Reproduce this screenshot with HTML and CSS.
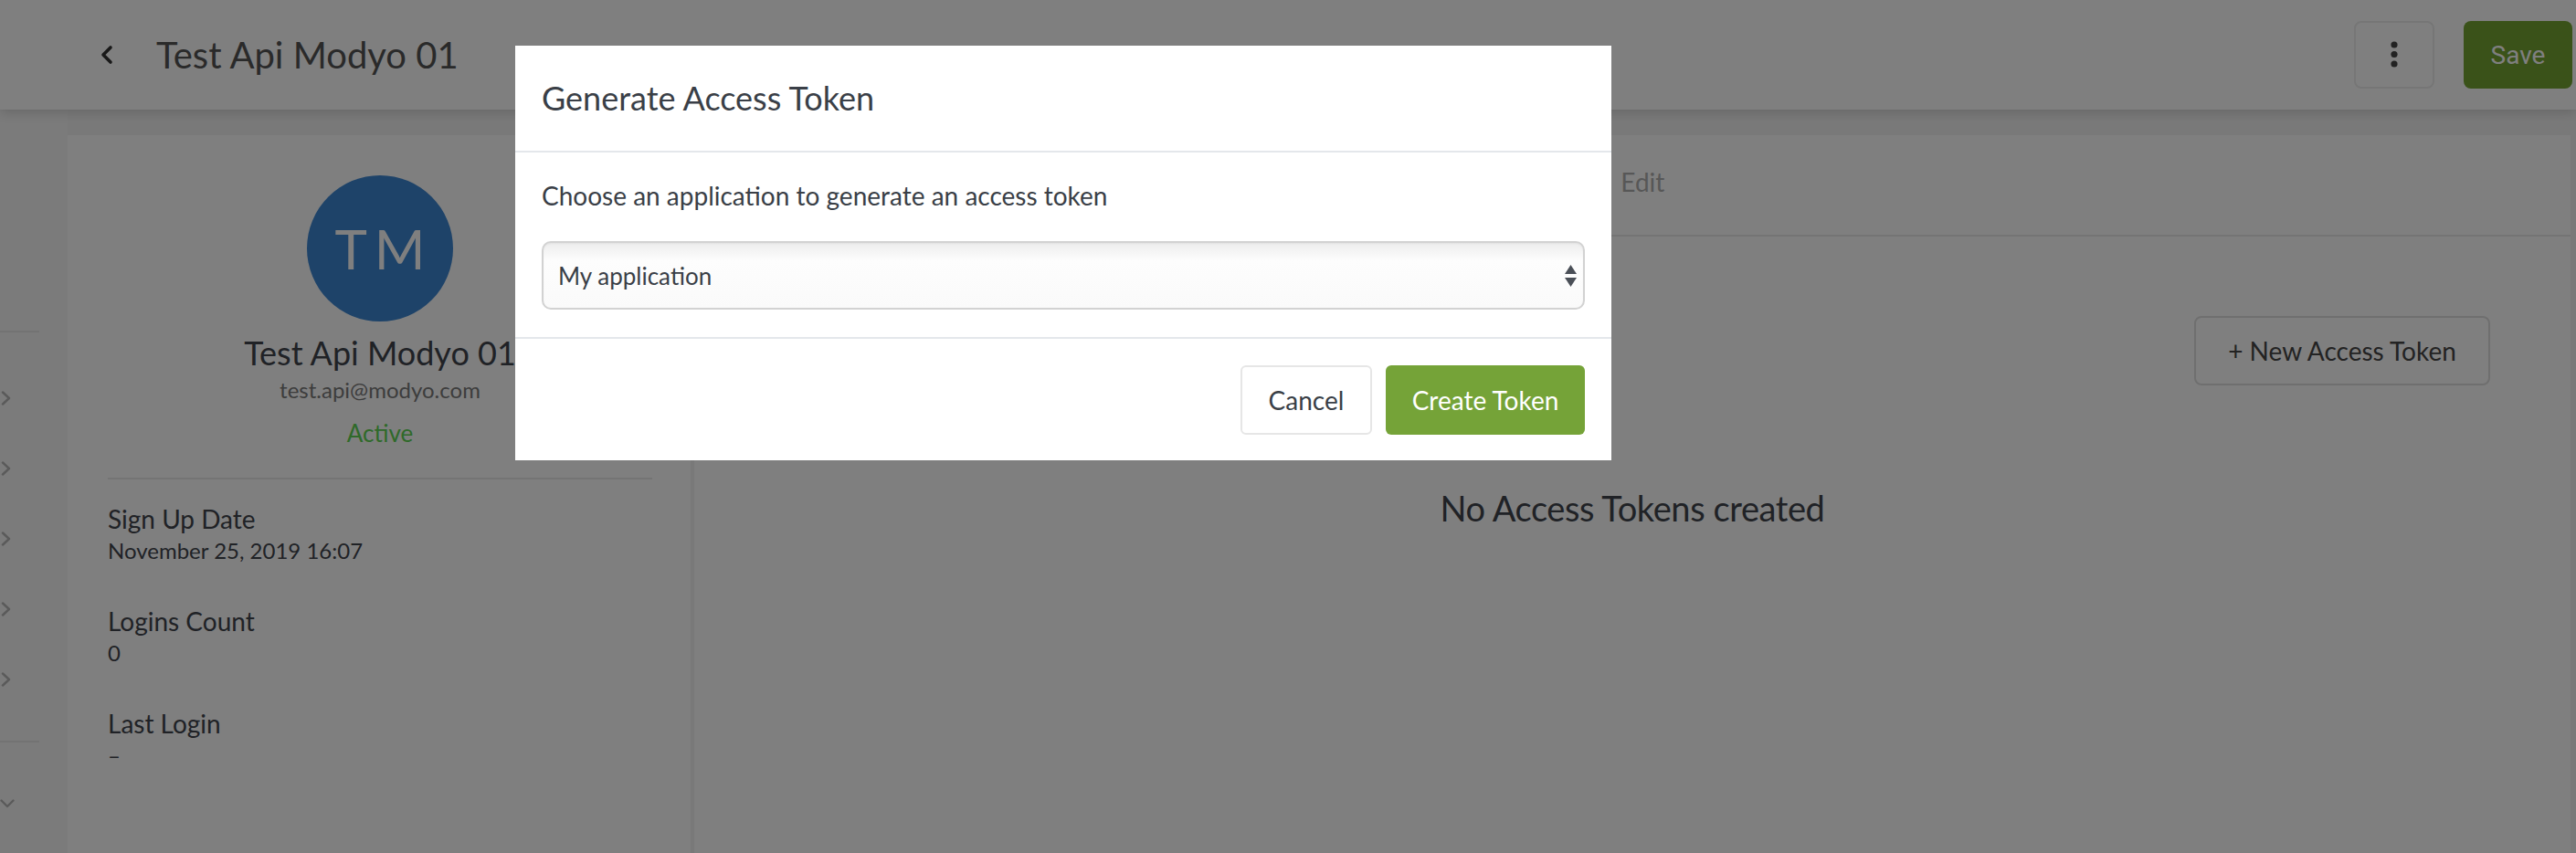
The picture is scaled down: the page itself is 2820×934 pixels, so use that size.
FILE: index.html
```html
<!DOCTYPE html>
<html lang="en">
<head>
<meta charset="utf-8">
<title>Test Api Modyo 01</title>
<link rel="stylesheet" href="styles.css">
</head>
<body>
<div class="page">
  <header class="topbar">
    <button class="back" type="button" aria-label="Back">
      <svg width="18" height="22" viewBox="0 0 18 22"><path d="M13 3 L5 11 L13 19" fill="none" stroke="#333" stroke-width="3.6" stroke-linecap="round" stroke-linejoin="round"/></svg>
    </button>
    <h1 class="page-title">Test Api Modyo 01</h1>
    <div class="topbar-actions">
      <button class="btn-kebab" type="button" aria-label="More">
        <svg width="10" height="30" viewBox="0 0 10 30"><circle cx="5" cy="4" r="3.6" fill="#444"/><circle cx="5" cy="14.5" r="3.6" fill="#444"/><circle cx="5" cy="25" r="3.6" fill="#444"/></svg>
      </button>
      <button class="btn-save" type="button">Save</button>
    </div>
  </header>

  <div class="layout">
    <aside class="sidebar">
      <div class="side-rule"></div>
      <ul class="side-list">
        <li class="side-item"><svg width="12" height="16" viewBox="0 0 12 16"><path d="M2 1.5 L9 8 L2 14.5" fill="none" stroke="#b4b4b4" stroke-width="2.4" stroke-linecap="round" stroke-linejoin="round"/></svg></li>
        <li class="side-item"><svg width="12" height="16" viewBox="0 0 12 16"><path d="M2 1.5 L9 8 L2 14.5" fill="none" stroke="#b4b4b4" stroke-width="2.4" stroke-linecap="round" stroke-linejoin="round"/></svg></li>
        <li class="side-item"><svg width="12" height="16" viewBox="0 0 12 16"><path d="M2 1.5 L9 8 L2 14.5" fill="none" stroke="#b4b4b4" stroke-width="2.4" stroke-linecap="round" stroke-linejoin="round"/></svg></li>
        <li class="side-item"><svg width="12" height="16" viewBox="0 0 12 16"><path d="M2 1.5 L9 8 L2 14.5" fill="none" stroke="#b4b4b4" stroke-width="2.4" stroke-linecap="round" stroke-linejoin="round"/></svg></li>
        <li class="side-item"><svg width="12" height="16" viewBox="0 0 12 16"><path d="M2 1.5 L9 8 L2 14.5" fill="none" stroke="#b4b4b4" stroke-width="2.4" stroke-linecap="round" stroke-linejoin="round"/></svg></li>
      </ul>
      <div class="side-rule lower"></div>
      <div class="side-more"><svg width="16" height="10" viewBox="0 0 16 10"><path d="M1.5 1.5 L8 8 L14.5 1.5" fill="none" stroke="#b4b4b4" stroke-width="2.4" stroke-linecap="round" stroke-linejoin="round"/></svg></div>
    </aside>

    <main class="content">
      <section class="profile-card">
        <div class="avatar">TM</div>
        <h2 class="profile-name">Test Api Modyo 01</h2>
        <div class="profile-email">test.api@modyo.com</div>
        <div class="profile-status">Active</div>
        <div class="profile-rule"></div>
        <dl class="info">
          <div class="info-item"><dt>Sign Up Date</dt><dd>November 25, 2019 16:07</dd></div>
          <div class="info-item"><dt>Logins Count</dt><dd>0</dd></div>
          <div class="info-item"><dt>Last Login</dt><dd>–</dd></div>
        </dl>
      </section>

      <section class="tokens-panel">
        <nav class="tabs">
          <span class="tab">Profile</span>
          <span class="tab tab-active">Access Tokens</span>
          <span class="tab">Edit</span>
        </nav>
        <div class="tokens-body">
          <button class="btn-new" type="button">+ New Access Token</button>
          <h3 class="empty">No Access Tokens created</h3>
        </div>
      </section>
    </main>
  </div>
</div>

<div class="backdrop"></div>

<div class="modal" role="dialog" aria-labelledby="modal-title">
  <div class="modal-header">
    <h2 class="modal-title" id="modal-title">Generate Access Token</h2>
  </div>
  <div class="modal-body">
    <p class="modal-text">Choose an application to generate an access token</p>
    <div class="select-wrap">
      <select class="select">
        <option>My application</option>
      </select>
      <svg class="select-arrows" width="13" height="25" viewBox="0 0 13 25"><polygon points="6.5,0 13,10 0,10" fill="#4a4f57"/><polygon points="0,14 13,14 6.5,24" fill="#4a4f57"/></svg>
    </div>
  </div>
  <div class="modal-footer">
    <button class="btn-cancel" type="button">Cancel</button>
    <button class="btn-create" type="button">Create Token</button>
  </div>
</div>
</body>
</html>
```

FILE: styles.css
```css
* { box-sizing: border-box; }

html, body {
  margin: 0;
  width: 2820px;
  height: 934px;
  overflow: hidden;
}

body {
  font-family: Lato, "Open Sans", sans-serif;
  background: #f3f3f3;
  color: #41454d;
}

button {
  font-family: inherit;
  cursor: pointer;
}

.page {
  display: flex;
  flex-direction: column;
  height: 934px;
}

/* ---------- top bar ---------- */
.topbar {
  flex: none;
  height: 120px;
  display: flex;
  align-items: center;
  padding: 0 4px 0 108px;
  background: #fff;
  box-shadow: 0 3px 12px rgba(0, 0, 0, 0.16);
  position: relative;
  z-index: 1;
}

.back {
  display: flex;
  padding: 0;
  border: 0;
  background: none;
}

.page-title {
  margin: 0 0 0 45px;
  font-size: 40px;
  line-height: 48px;
  font-weight: 400;
  color: #555;
}

.topbar-actions {
  margin-left: auto;
  display: flex;
  align-items: center;
  gap: 32px;
}

.btn-kebab {
  width: 88px;
  height: 74px;
  display: flex;
  align-items: center;
  justify-content: center;
  padding: 0;
  background: #fff;
  border: 2px solid #ececec;
  border-radius: 8px;
}

.btn-save {
  width: 119px;
  height: 74px;
  border: 0;
  border-radius: 8px;
  background: #74a432;
  color: #fff;
  font-family: Roboto, "Liberation Sans", sans-serif;
  font-size: 28px;
}

/* ---------- layout ---------- */
.layout {
  flex: 1;
  display: flex;
  min-height: 0;
}

.sidebar {
  flex: none;
  width: 74px;
  background: #f6f6f6;
  padding-top: 242px;
}

.side-rule {
  width: 43px;
  height: 2px;
  background: #e6e6e6;
}

.side-rule.lower {
  margin-top: 29px;
}

.side-list {
  list-style: none;
  margin: 0;
  padding: 33px 0 0;
}

.side-item {
  height: 77px;
  display: flex;
  align-items: center;
  padding-left: 1px;
}

.side-more {
  display: flex;
  margin-top: 62px;
}

.content {
  flex: 1;
  display: flex;
  gap: 4px;
  padding: 28px 6px 0 0;
}

/* ---------- profile card ---------- */
.profile-card {
  flex: none;
  width: 682px;
  background: #fff;
  padding: 44px 42px 0 44px;
  display: flex;
  flex-direction: column;
  align-items: center;
}

.avatar {
  width: 160px;
  height: 160px;
  border-radius: 50%;
  background: #3c86d2;
  color: #fff;
  display: flex;
  align-items: center;
  justify-content: center;
  font-size: 60px;
  letter-spacing: 8px;
  padding-left: 8px;
  font-weight: 400;
}

.profile-name {
  margin: 12px 0 0;
  font-size: 36px;
  line-height: 44px;
  font-weight: 400;
  white-space: nowrap;
}

.profile-email {
  margin-top: 4px;
  font-size: 24px;
  line-height: 30px;
  color: #7a7a7a;
}

.profile-status {
  margin-top: 15px;
  font-size: 26px;
  line-height: 34px;
  color: #5ed454;
}

.profile-rule {
  align-self: stretch;
  height: 2px;
  margin-top: 32px;
  background: #e8e8e8;
}

.info {
  align-self: stretch;
  margin: 25px 0 0;
}

.info-item + .info-item {
  margin-top: 44px;
}

.info dt {
  font-size: 28px;
  line-height: 36px;
}

.info dd {
  margin: 2px 0 0;
  font-size: 24px;
  line-height: 30px;
}

/* ---------- tokens panel ---------- */
.tokens-panel {
  flex: 1;
  background: #fff;
  display: flex;
  flex-direction: column;
}

.tabs {
  height: 111px;
  flex: none;
  display: flex;
  gap: 60px;
  padding-left: 640px;
  border-bottom: 2px solid #e8e8e8;
}

.tab {
  padding-top: 33px;
  font-size: 28px;
  line-height: 36px;
  color: #aeaeae;
}

.tokens-body {
  display: flex;
  flex-direction: column;
  padding: 87px 88px 0;
}

.btn-new {
  align-self: flex-end;
  width: 324px;
  height: 76px;
  background: #fff;
  border: 2px solid #dedede;
  border-radius: 8px;
  font-size: 28px;
  color: #464646;
}

.empty {
  margin: 110px 0 0;
  text-align: center;
  font-size: 38px;
  line-height: 48px;
  letter-spacing: -0.4px;
  font-weight: 400;
}

/* ---------- modal ---------- */
.backdrop {
  position: fixed;
  inset: 0;
  background: rgba(0, 0, 0, 0.5);
  z-index: 5;
}

.modal {
  position: fixed;
  left: 564px;
  top: 50px;
  width: 1200px;
  background: #fff;
  z-index: 10;
  color: #3a3f47;
}

.modal-header {
  padding: 35px 29px 36px;
  border-bottom: 2px solid #e4e7eb;
}

.modal-title {
  margin: 0;
  font-size: 36px;
  line-height: 44px;
  font-weight: 400;
}

.modal-body {
  padding: 29px 29px 30px;
}

.modal-text {
  margin: 0;
  font-size: 28px;
  line-height: 36px;
}

.select-wrap {
  position: relative;
  margin-top: 32px;
}

.select {
  display: block;
  width: 100%;
  height: 75px;
  appearance: none;
  -webkit-appearance: none;
  padding: 0 40px 0 16px;
  border: 2px solid #d2d2d2;
  border-radius: 10px;
  background: linear-gradient(#ededed, #fdfdfd 28%, #fafafa);
  box-shadow: inset 0 1px 2px rgba(0, 0, 0, 0.05);
  font-family: inherit;
  font-size: 26px;
  color: #3a3f47;
}

.select-arrows {
  position: absolute;
  right: 9px;
  top: 26px;
  pointer-events: none;
}

.modal-footer {
  display: flex;
  justify-content: flex-end;
  gap: 15px;
  padding: 29px 29px 28px;
  border-top: 2px solid #e4e7eb;
}

.btn-cancel,
.btn-create {
  height: 76px;
  border-radius: 6px;
  font-size: 28px;
}

.btn-cancel {
  width: 144px;
  background: #fff;
  border: 2px solid #e6e6e6;
  color: #3a3f47;
}

.btn-create {
  width: 218px;
  border: 0;
  background: #75a338;
  color: #fff;
}
```
